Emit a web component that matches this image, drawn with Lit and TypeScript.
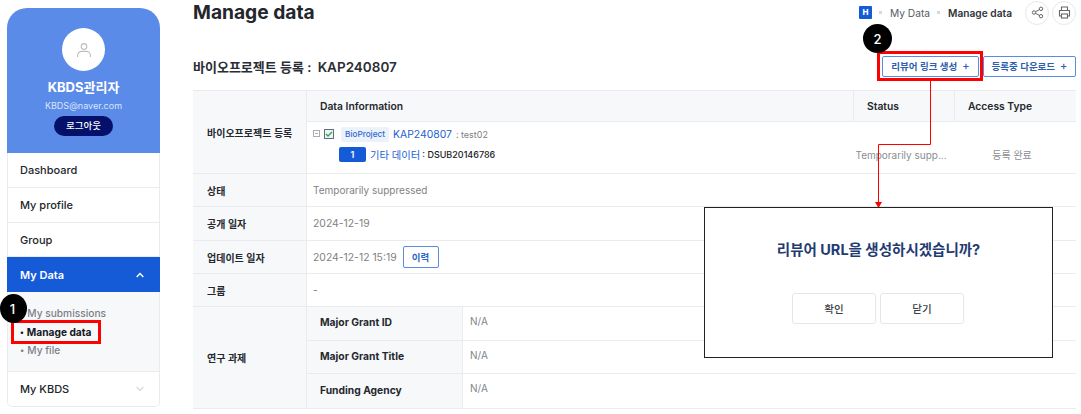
import { LitElement, html, css } from "lit";
import { customElement } from "lit/decorators.js";

@customElement("app-root")
export class AppRoot extends LitElement {
  static styles = css`
    :host { display: block; position: relative; width: 1081px; height: 414px; overflow: hidden; background: #fff;
      font-family: Inter, "Noto Sans CJK KR", sans-serif; color: #1c2128; }
    * { box-sizing: border-box; }
    .page { display: flex; height: 414px; align-items: flex-start; }
    .side { width: 153px; margin: 8px 0 0 7px; flex: none; }
    .profile { height: 145px; background: #5a8be8; border-radius: 20px 20px 0 0; display: flex; flex-direction: column; align-items: center; padding-top: 20px; color: #fff; }
    .avatar { width: 43px; height: 43px; border-radius: 50%; background: #fff; display: flex; align-items: center; justify-content: center; }
    .name { font-size: 13px; font-weight: 700; line-height: 16px; margin-top: 8px; }
    .mail { font-size: 9px; line-height: 12px; margin-top: 5px; color: #dbe6fb; }
    .logout { margin-top: 4px; width: 59px; height: 20px; border-radius: 10px; background: #04106a; font-size: 9.5px; font-weight: 500; line-height: 20px; text-align: center; }
    .menu { border: 1px solid #e9ebee; border-top: 0; border-radius: 0 0 5px 5px; }
    .item { height: 35px; display: flex; align-items: center; justify-content: space-between; padding: 0 15px 0 12px; font-size: 11px; font-weight: 500; border-bottom: 1px solid #e9ebee; color: #22262c; }
    .item.short { height: 34px; padding-top: 1px; }
    .item.active { background: #155bd8; color: #fff; font-weight: 600; border-bottom: 0; margin: 0 -1px; padding: 1px 16px 0 13px; width: 153px; }
    .item.last { border-bottom: 0; height: 34px; }
    .sub { height: 80px; background: #f7f8fa; border-bottom: 1px solid #e9ebee; padding: 12px 0 0 12px; font-size: 10.2px; line-height: 18.5px; color: #7a7f87; font-weight: 500; }
    .sub div::before { content: "•"; font-size: 8px; margin-right: 3px; vertical-align: 1px; }
    .sub .on { color: #16191d; font-weight: 700; }
    .main { width: 883px; margin-left: 33px; flex: none; }
    .top { height: 25px; margin-bottom: 2px; display: flex; align-items: center; justify-content: space-between; }
    h1 { margin: 0; font-size: 19.2px; line-height: 25px; font-weight: 700; color: #23262b; }
    .crumbs { display: flex; align-items: center; font-size: 10.2px; color: #555b63; }
    .crumbs b { font-weight: 600; color: #30343a; }
    .home { width: 13px; height: 13px; background: #155bd8; color: #fff; font-size: 8px; font-weight: 800; line-height: 13px; text-align: center; border-radius: 1px; }
    .dot { width: 3px; height: 3px; background: #d5d8dc; margin: 0 8px 0 7px; }
    .round { width: 24px; height: 24px; border: 1px solid #e6e8eb; border-radius: 50%; display: flex; align-items: center; justify-content: center; margin-left: 3px; }
    .round.first { margin-left: 13px; }
    .headrow { height: 63px; display: flex; align-items: center; justify-content: space-between; padding-top: 15px; }
    h2 { margin: 0; font-size: 13px; font-weight: 600; color: #2a2d33; }
    h2 span { margin-left: 3px; font-size: 13.5px; }
    .btns { display: flex; gap: 4px; }
    .btn { height: 21px; border: 1px solid #5b8be0; border-radius: 2px; color: #2d5fae; font-size: 9.5px; font-weight: 600; display: flex; align-items: center; justify-content: center; gap: 5px; }
    .btn i { font-style: normal; font-size: 11px; font-weight: 500; }
    .b1 { width: 97px; }
    .b2 { width: 93px; }
    .table { border-top: 1px solid #e9ebee; font-size: 10px; }
    .row { display: flex; border-bottom: 1px solid #e9ebee; }
    .row.r33 { height: 33px; }
    .row.r34 { height: 34px; }
    .lab { width: 114px; flex: none; background: #f7f8fa; border-right: 1px solid #e9ebee; padding-left: 14px; font-weight: 600; color: #24282e; display: flex; align-items: center; }
    .val { flex: 1; display: flex; align-items: center; padding-left: 6px; color: #7f8184; font-size: 10.4px; }
    .val.st { font-size: 10px; }
    .hcell { background: #f7f8fa; font-size: 10.3px; font-weight: 600; display: flex; align-items: center; border-right: 1px solid #e9ebee; color: #24282e; height: 30px; padding: 0 0 1px 13px; }
    .hcell.c1 { width: 547px; }
    .hcell.c2 { width: 101px; }
    .hcell.c3 { width: 121px; border-right: 0; }
    .col { flex: 1; min-width: 0; }
    .cols { display: flex; }
    .body { border-top: 1px solid #e9ebee; height: 52px; }
    .tree { display: flex; height: 24px; align-items: center; padding-left: 6px; }
    .ckbox { margin-left: 3px; }
    .tag { background: #ecf2fc; color: #2f68c9; font-size: 8.2px; font-weight: 500; height: 15px; line-height: 15px; padding: 0 4px; border-radius: 2px; margin-left: 7px; }
    .link { color: #1d5fd1; font-size: 10.4px; margin-left: 4px; }
    .note { font-size: 9px; margin-left: 4px; color: #7f8184; }
    .child { align-items: center; height: 17px; }
    .cname { width: 547px; display: flex; align-items: center; }
    .num { width: 27px; height: 15px; background: #155bd8; border-radius: 2px; color: #fff; font-size: 9px; font-weight: 600; line-height: 15px; text-align: center; margin-left: 32px; }
    .link.k { font-size: 10.3px; }
    .acc { font-size: 9px; margin-left: 2px; color: #1c2128; font-weight: 500; }
    .cstat { width: 101px; padding-right: 7px; text-align: center; color: #8a8e94; font-size: 10px; white-space: nowrap; }
    .cacc { width: 121px; padding-right: 7px; text-align: center; color: #8a8e94; font-size: 10px; }
    .small { width: 36px; height: 22px; border: 1px solid #5b8be0; border-radius: 2px; color: #2d66c6; font-size: 9.5px; font-weight: 600; display: flex; align-items: center; justify-content: center; margin-left: 6px; }
    .subrow { display: flex; height: 33.5px; border-bottom: 1px solid #e9ebee; }
    .subrow:last-child { border-bottom: 0; }
    .slab { width: 156px; background: #f7f8fa; border-right: 1px solid #e9ebee; padding: 0 0 2px 13px; font-size: 10.3px; font-weight: 700; display: flex; align-items: center; color: #24282e; }
    .sval { padding: 8px 0 0 7px; color: #80858b; font-size: 10px; }
    .mark { position: absolute; border-radius: 50%; background: #000; color: #fff; display: flex; align-items: center; justify-content: center; font-size: 13px; font-weight: 500; }
    .m1 { left: 0; top: 294px; width: 27px; height: 29px; padding-right: 2px; }
    .m2 { left: 863px; top: 24px; width: 29px; height: 29px; }
    .red { position: absolute; border: 3px solid #f00; }
    .r1 { left: 11px; top: 320px; width: 90px; height: 24px; }
    .r2 { left: 877px; top: 51px; width: 106px; height: 30px; }
    .arrow { position: absolute; left: 0; top: 0; pointer-events: none; }
    .dialog { position: absolute; left: 704px; top: 207px; width: 349px; height: 151px; border: 1px solid #222; background: #fff; display: flex; flex-direction: column; align-items: center; padding-top: 32px; }
    .dialog .q { font-size: 14.5px; font-weight: 700; line-height: 20px; color: #1f3c72; }
    .dbtns { display: flex; gap: 4px; margin: 33px 1px 0 0; }
    .dbtn { width: 84px; height: 31px; border: 1px solid #e4e6e9; border-radius: 3px; font-size: 10.5px; font-weight: 500; color: #3c4046; display: flex; align-items: center; justify-content: center; }
  `;

  render() {
    return html`
      <div class="page">
        <aside class="side">
          <div class="profile">
            <div class="avatar">
              <svg width="16" height="16" viewBox="0 0 16 16" fill="none" stroke="#bdbdbd" stroke-width="1.1"><circle cx="8" cy="4.4" r="2.8"/><path d="M1.6 15v-1.6a4 4 0 0 1 4-4h4.8a4 4 0 0 1 4 4V15"/></svg>
            </div>
            <div class="name">KBDS관리자</div>
            <div class="mail">KBDS@naver.com</div>
            <div class="logout">로그아웃</div>
          </div>
          <nav class="menu">
            <div class="item">Dashboard</div>
            <div class="item">My profile</div>
            <div class="item short">Group</div>
            <div class="item active">My Data
              <svg width="8" height="6" viewBox="0 0 8 6" fill="none" stroke="#fff" stroke-width="1.4"><path d="M.7 5 4 1.5 7.3 5"/></svg>
            </div>
            <div class="sub">
              <div>My submissions</div>
              <div class="on">Manage data</div>
              <div>My file</div>
            </div>
            <div class="item last">My KBDS
              <svg width="8" height="6" viewBox="0 0 8 6" fill="none" stroke="#d4d7db" stroke-width="1.2"><path d="M.7 1 4 4.500 7.300 1"/></svg>
            </div>
          </nav>
        </aside>
        <main class="main">
          <div class="top">
            <h1>Manage data</h1>
            <div class="crumbs">
              <div class="home">H</div><i class="dot"></i>My Data<i class="dot"></i><b>Manage data</b>
              <div class="round first">
                <svg width="13" height="13" viewBox="0 0 13 13" fill="none" stroke="#666" stroke-width="1"><circle cx="10" cy="2.800" r="1.700"/><circle cx="3" cy="6.500" r="1.700"/><circle cx="10" cy="10.200" r="1.700"/><path d="M4.500 5.700 8.500 3.600M4.500 7.300l4 2.100"/></svg>
              </div>
              <div class="round">
                <svg width="13" height="13" viewBox="0 0 13 13" fill="none" stroke="#666" stroke-width="1.100"><path d="M3.500 4V1h6v3M3.500 10H1.500V4.500h10V10h-2"/><rect x="3.500" y="8" width="6" height="4"/></svg>
              </div>
            </div>
          </div>
          <div class="headrow">
            <h2>바이오프로젝트 등록 : <span>KAP240807</span></h2>
            <div class="btns">
              <div class="btn b1">리뷰어 링크 생성 <i>+</i></div>
              <div class="btn b2">등록중 다운로드 <i>+</i></div>
            </div>
          </div>
          <div class="table">
            <div class="row">
              <div class="lab">바이오프로젝트 등록</div>
              <div class="col">
                <div class="cols">
                  <div class="hcell c1">Data Information</div>
                  <div class="hcell c2">Status</div>
                  <div class="hcell c3">Access Type</div>
                </div>
                <div class="body">
                  <div class="tree">
                    <svg width="8" height="8" viewBox="0 0 8 8" fill="none" stroke="#a9adb2"><rect x=".5" y=".5" width="6" height="6"/><path d="M2 3.500h3"/></svg>
                    <svg class="ckbox" width="10" height="10" viewBox="0 0 10 10" fill="none"><rect x=".5" y=".5" width="9" height="9" fill="#eef3f6" stroke="#5e6f80"/><path d="M2 5l2 2 4-4" stroke="#2aa84a" stroke-width="1.300"/></svg>
                    <span class="tag">BioProject</span>
                    <span class="link">KAP240807</span>
                    <span class="note">: test02</span>
                  </div>
                  <div class="cols child">
                    <div class="cname">
                      <div class="num">1</div>
                      <span class="link k">기타 데이터</span>
                      <span class="acc">: DSUB20146786</span>
                    </div>
                    <div class="cstat">Temporarily supp...</div>
                    <div class="cacc">등록 완료</div>
                  </div>
                </div>
              </div>
            </div>
            <div class="row r33"><div class="lab">상태</div><div class="val st">Temporarily suppressed</div></div>
            <div class="row r34"><div class="lab">공개 일자</div><div class="val">2024-12-19</div></div>
            <div class="row r33"><div class="lab">업데이트 일자</div><div class="val">2024-12-12 15:19<div class="small">이력</div></div></div>
            <div class="row r33"><div class="lab">그룹</div><div class="val">-</div></div>
            <div class="row">
              <div class="lab">연구 과제</div>
              <div class="col">
                <div class="subrow"><div class="slab">Major Grant ID</div><div class="sval">N/A</div></div>
                <div class="subrow"><div class="slab">Major Grant Title</div><div class="sval">N/A</div></div>
                <div class="subrow"><div class="slab">Funding Agency</div><div class="sval">N/A</div></div>
              </div>
            </div>
          </div>
        </main>
      </div>
      <div class="red r1"></div>
      <div class="red r2"></div>
      <div class="mark m1">1</div>
      <div class="mark m2">2</div>
      <svg class="arrow" width="1081" height="414" fill="none"><path d="M930.500 81V144.500H878.500V203" stroke="#f00" stroke-width="1"/><path d="M875 202h7l-3.500 6z" fill="#f00"/></svg>
      <div class="dialog">
        <div class="q">리뷰어 URL을 생성하시겠습니까?</div>
        <div class="dbtns"><div class="dbtn">확인</div><div class="dbtn">닫기</div></div>
      </div>
    `;
  }
}
